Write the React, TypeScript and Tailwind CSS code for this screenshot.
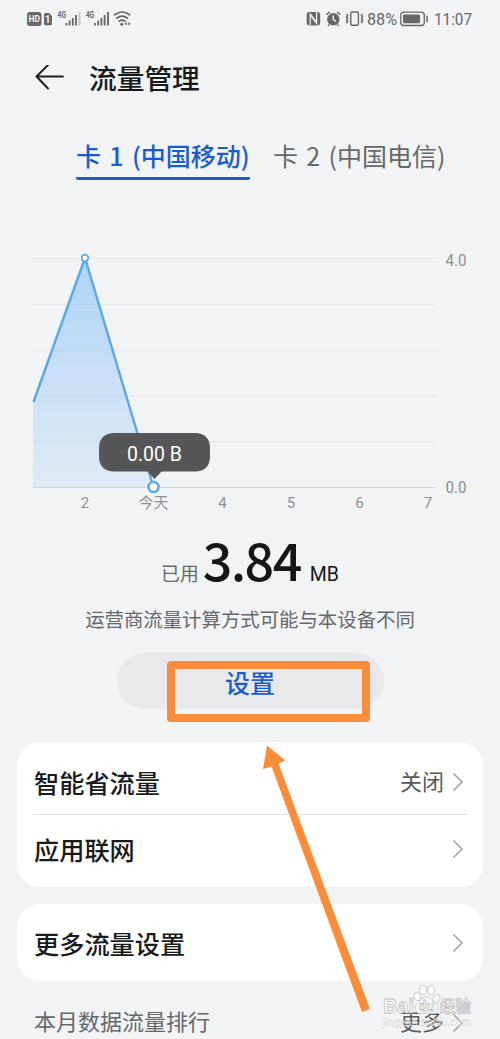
import React from 'react';

const StatusBar = () => (
  <div className="flex h-[38px] items-center justify-between pl-[27px] pr-[24px] text-[#666769]">
    <svg width="110" height="20" viewBox="27 9 110 20" fill="currentColor">
      <rect x="27" y="12" width="14.500" height="14" rx="3" />
      <text x="34.200" y="22.300" fontSize="8.500" fontWeight="700" textAnchor="middle" fill="#f1f3f5" fontFamily="Roboto, sans-serif">HD</text>
      <path d="M45.500 13h3.500l3 3v7.700q0 1.500-1.500 1.500h-5q-1.500 0-1.500-1.500v-9.200q0-1.500 1.500-1.500z" />
      <text x="47.700" y="22.800" fontSize="10" fontWeight="700" textAnchor="middle" fill="#f1f3f5" fontFamily="Roboto, sans-serif">1</text>
      <text x="57.500" y="18" fontSize="9" fontWeight="700" fontFamily="Roboto, sans-serif" textLength="8.500" lengthAdjust="spacingAndGlyphs">4G</text>
      <path d="M65.500 23h1.800v2.500h-1.800zM68.700 20.500h1.800v5h-1.800zM71.900 18h1.800v7.500h-1.800zM75.100 15h1.800v10.500h-1.800z" />
      <path d="M78.600 12h1.800v13.500h-1.800z" opacity=".3" />
      <text x="85.700" y="18" fontSize="9" fontWeight="700" fontFamily="Roboto, sans-serif" textLength="8.500" lengthAdjust="spacingAndGlyphs">4G</text>
      <path d="M94 23h1.800v2.500h-1.800zM97.300 20.500h1.800v5h-1.800zM100.500 18h1.800v7.500h-1.800zM103.700 15h1.800v10.500h-1.800zM107 12h1.900v13.500h-1.900z" />
      <g fill="none" stroke="currentColor" strokeWidth="1.700" strokeLinecap="round">
        <path d="M114.500 14.800q7.600-5.600 15.200 0M116.800 18.200q5.300-4 10.600 0M119.200 21.300q2.900-2.200 5.800 0" />
      </g>
      <circle cx="121.800" cy="24.200" r="1.500" />
      <path d="M124.500 23.700l2.300-1.800v3.600zM130.700 23.700l-2.300-1.800v3.600z" />
    </svg>
    <svg width="170" height="20" viewBox="306 9 170 20" fill="currentColor">
      <rect x="306.700" y="12" width="13.500" height="13.500" rx="3" />
      <path d="M310.200 25.500v-10.500l6.400 8.500v-11.500" fill="none" stroke="#f1f3f5" strokeWidth="1.200" />
      <path d="M310.200 13.500l6.400 8.500" fill="none" stroke="#f1f3f5" strokeWidth="1.200" />
      <circle cx="333.300" cy="19.300" r="6.200" />
      <path d="M326.500 14.700l3.200-2.700M340.200 14.700l-3.200-2.700M329.200 24.500l-1.200 1.300M337.400 24.500l1.200 1.300" stroke="currentColor" strokeWidth="1.600" />
      <path d="M333.300 15.500v4.200l2.700 1.800" fill="none" stroke="#f1f3f5" strokeWidth="1.400" />
      <rect x="350.800" y="12" width="7.600" height="13.200" rx="1.500" fill="none" stroke="currentColor" strokeWidth="1.400" />
      <path d="M346.500 14l1.300 1.500-1.300 1.500 1.300 1.500-1.300 1.500 1.300 1.500-1.300 1.500M362.700 14l-1.300 1.500 1.300 1.500-1.300 1.500 1.300 1.500-1.300 1.500 1.300 1.500" fill="none" stroke="currentColor" strokeWidth="1.400" />
      <text x="367" y="25" fontSize="17" fontFamily="Roboto, sans-serif" textLength="30" lengthAdjust="spacingAndGlyphs">88%</text>
      <rect x="400.800" y="12.200" width="23.500" height="13.300" rx="3" fill="none" stroke="currentColor" strokeWidth="1.300" />
      <rect x="403" y="14.400" width="17" height="8.900" rx="1" />
      <rect x="426.300" y="15.500" width="1.500" height="7" rx=".7" />
      <text x="434" y="25" fontSize="17" fontFamily="Roboto, sans-serif" textLength="38" lengthAdjust="spacingAndGlyphs">11:07</text>
    </svg>
  </div>
);

const UsageChart = () => {
  const gridLines = [258.5, 304.5, 350, 396, 441.5];
  const days = [
    { label: '2', x: 85 },
    { label: '今天', x: 153.5 },
    { label: '4', x: 222.5 },
    { label: '5', x: 291 },
    { label: '6', x: 359.5 },
    { label: '7', x: 428 }
  ];

  return (
    <svg className="block" width="500" height="280" viewBox="0 240 500 280" fontFamily="Roboto, 'Noto Sans CJK SC', sans-serif">
      <defs>
        <linearGradient id="usage" x1="0" y1="0" x2="0" y2="1">
          <stop offset="0" stopColor="#afd4f8" />
          <stop offset="1" stopColor="#e1eaf5" />
        </linearGradient>
      </defs>
      <path d="M33 402L85 258L153.500 487.500H33z" fill="url(#usage)" />
      {gridLines.map((y) => (
        <path key={y} d={`M33 ${y}H436`} stroke="#6b7785" strokeOpacity=".08" />
      ))}
      <path d="M33 487.500H436" stroke="#d3d6d9" />
      <path d="M33.500 402L85 258L153.500 487" fill="none" stroke="#5fa9e5" strokeWidth="2.500" />
      <circle cx="85" cy="258" r="3.300" fill="#fff" stroke="#5fa9e5" strokeWidth="1.700" />
      <circle cx="153.500" cy="487" r="5" fill="#fff" stroke="#5fa9e5" strokeWidth="2.600" />
      <path d="M115 433H194.500Q210 433 210 448.500V456Q210 471.500 194.500 471.500H161.500L154.500 479L147.500 471.500H114.500Q99 471.500 99 456V448.500Q99 433 115 433z" fill="#555657" />
      <text x="154.500" y="460.500" fontSize="20" textAnchor="middle" fill="#fff" textLength="55" lengthAdjust="spacingAndGlyphs">0.00 B</text>
      {days.map((day) => (
        <text key={day.label} x={day.x} y="507.500" fontSize="15" textAnchor="middle" fill="#8e9092">
          {day.label}
        </text>
      ))}
      <text x="445.500" y="265.500" fontSize="16" fill="#8e9092" textLength="21" lengthAdjust="spacingAndGlyphs">4.0</text>
      <text x="445.500" y="492.500" fontSize="16" fill="#8e9092" textLength="21" lengthAdjust="spacingAndGlyphs">0.0</text>
    </svg>
  );
};

const Chevron = () => (
  <svg width="12" height="20" viewBox="0 0 12 20" fill="none" stroke="#a3a5a7" strokeWidth="1.6">
    <path d="M1.500 1.500L10 10L1.500 18.500" />
  </svg>
);

const Row = ({ label, value }: { label: string; value?: string }) => (
  <div className="flex h-10 items-center justify-between pl-[17px] pr-[19px]">
    <span className="pt-[6px] text-[25.2px] leading-9 font-medium text-[#191a1b]">{label}</span>
    <span className="flex items-center gap-2 text-[22px] leading-9 text-[#58595b]">
      {value && <span className="pt-[2px]">{value}</span>}
      <Chevron />
    </span>
  </div>
);

const Watermark = () => (
  <svg className="absolute left-[378px] top-[980px]" width="100" height="52" viewBox="378 980 100 52" fontFamily="'Liberation Sans', 'Noto Sans CJK SC', sans-serif">
    <g fill="#f9fafa" stroke="#c9cbcd" strokeWidth="1">
      <ellipse cx="417.500" cy="996.500" rx="3.400" ry="4.400" transform="rotate(-18 417.500 996.500)" />
      <ellipse cx="423" cy="990" rx="3.500" ry="4.600" />
      <ellipse cx="431" cy="990" rx="3.500" ry="4.600" transform="rotate(8 431 990)" />
      <ellipse cx="436.500" cy="998.500" rx="3.400" ry="4.400" transform="rotate(20 436.500 998.500)" />
      <path d="M426.500 997C421 997 420 1002 416.500 1004.500C413 1008 416 1014 421 1013.500Q426.500 1012.500 432 1013.500C438 1014 440 1008 436.500 1004.500C433 1002 432 997 426.500 997z" />
    </g>
    <g fill="#f9fafa" stroke="#bfc1c3" strokeWidth=".8" fontWeight="700">
      <text x="383" y="1012.500" fontSize="21" textLength="31" lengthAdjust="spacingAndGlyphs">Bai</text>
      <text x="418.500" y="1011" fontSize="14" textLength="16" lengthAdjust="spacingAndGlyphs">du</text>
      <text x="440" y="1012" fontSize="15.500" textLength="31">经验</text>
    </g>
    <text x="383" y="1025.500" fontSize="11" fill="#fff" fillOpacity=".5" stroke="#c9cbcd" strokeWidth=".3" textLength="88" lengthAdjust="spacingAndGlyphs">jingyan.baidu.com</text>
  </svg>
);

const App = () => {
  return (
    <div className="relative h-[1039px] w-[500px] overflow-hidden bg-[#f1f3f5] font-['Roboto','Noto_Sans_CJK_SC',sans-serif]">
      <StatusBar />

      <header className="flex h-[80px] items-center gap-[25px] pl-[35px]">
        <svg width="29" height="26" viewBox="0 0 29 26" fill="none" stroke="#1d1e1f" strokeWidth="1.900" strokeLinecap="round" strokeLinejoin="round">
          <path d="M28 11.500H1.500M13 0L1.500 11.500L13 23.500" />
        </svg>
        <h1 className="pt-[3px] text-[27.7px] leading-10 font-medium text-[#191a1b]">流量管理</h1>
      </header>

      <nav className="flex h-[122px] items-start gap-[23px] pl-[76px] pt-[18px] font-['Noto_Sans_CJK_SC',sans-serif] text-[25px] leading-[38px] whitespace-nowrap [word-spacing:2.7px]">
        <span className="h-[44px] w-[174px] rounded-[2px] border-b-[3px] border-[#205dc0] font-medium text-[#1b5bd0]">卡 1 (中国移动)</span>
        <span className="text-[#66686a]">卡 2 (中国电信)</span>
      </nav>

      <UsageChart />

      <section className="flex h-[222px] flex-col items-center pt-[8px]">
        <div className="flex h-[62px] items-baseline whitespace-nowrap text-[#151617]">
          <span className="text-[18.8px] text-[#66686a]">已用</span>
          <span className="ml-[4px] font-['Noto_Sans_CJK_SC',sans-serif] text-[52px] leading-[62px] font-medium tracking-[-1.6px]">3.84</span>
          <span className="ml-[9px] text-[19.5px]">MB</span>
        </div>
        <p className="mt-[17px] text-[19.4px] leading-7 text-[#66686a]">运营商流量计算方式可能与本设备不同</p>
        <button className="mt-[18px] h-[56px] w-[267px] rounded-full bg-[#e7e9ea] pt-[7px] text-[25px] leading-8 font-medium text-[#1b5bd0]">设置</button>
      </section>

      <main className="flex flex-col gap-[17px] px-[17px]">
        <div className="h-[145px] rounded-[23px] bg-white pt-[20px]">
          <Row label="智能省流量" value="关闭" />
          <div className="mx-[16px] mt-[12px] mb-[14px] h-px bg-[#e0e1e2]" />
          <Row label="应用联网" />
        </div>
        <div className="h-[77px] rounded-[23px] bg-white pt-[19px]">
          <Row label="更多流量设置" />
        </div>
      </main>

      <footer className="flex items-center justify-between pl-[34px] pr-[36px] pt-[24px] text-[22px] leading-9 text-[#66686a]">
        <span>本月数据流量排行</span>
        <span className="flex items-center gap-2 text-[#58595b]">
          更多
          <Chevron />
        </span>
      </footer>

      <Watermark />

      {/* Highlight box and pointer drawn over the settings button */}
      <div className="absolute left-[167px] top-[661px] h-[61px] w-[203px] rounded-[4px] border-8 border-[#fb8c3a]" />
      <svg className="absolute left-[260px] top-[740px]" width="115" height="275" viewBox="260 740 115 275">
        <path d="M267 745.500L285.500 760.500L278.500 763.500L370 1009L362 1012L271.500 766.500L263 769z" fill="#fb8c3a" />
      </svg>
    </div>
  );
};

export default App;
